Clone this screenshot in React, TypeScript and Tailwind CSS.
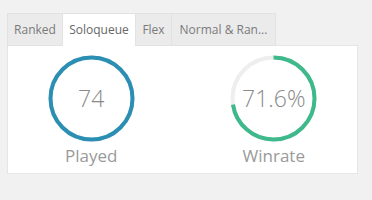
import React from "react";

function Ring({ pct, color, track, label, value }: { pct: number; color: string; track: string; label: string; value: string }) {
  const r = 41.5;
  const c = 2 * Math.PI * r;
  return (
    <div className="flex w-1/2 flex-col items-center">
      <div className="relative h-[87px] w-[87px]">
        <svg width="87" height="87" viewBox="0 0 87 87" className="absolute left-0 top-0 -rotate-90">
          <circle cx="43.5" cy="43.5" r={r - 0.5} fill="none" stroke={track} strokeWidth="4" />
          <circle
            cx="43.5"
            cy="43.5"
            r={r - 0.5}
            fill="none"
            stroke={color}
            strokeWidth="4"
            strokeDasharray={`${c * pct} ${c}`}
          />
        </svg>
        <div className="absolute inset-0 flex items-center justify-center text-[23px] font-light text-[#8a8a8a]">
          {value}
        </div>
      </div>
      <div className="mt-[2px] text-[17px] leading-[24px] text-[#9a9a9a]">{label}</div>
    </div>
  );
}

export default function App() {
  const tabs = [
    { name: "Ranked", w: "w-[55px]" },
    { name: "Soloqueue", w: "w-[73px]", active: true },
    { name: "Flex", w: "w-[36px]" },
    { name: "Normal & Ran...", w: "w-[105px]" },
  ];
  return (
    <div className="h-[200px] w-[372px] bg-[#f1f1f1] pl-[7px] pt-[13px]" style={{ fontFamily: '"Open Sans", sans-serif' }}>
      <div className="flex h-[32px]">
        {tabs.map((t) => (
          <div
            key={t.name}
            className={`${t.w} flex h-[33px] items-center justify-center border border-r-0 border-[#e2e2e2] text-[12px] last:border-r ${
              t.active ? "relative z-10 border-b-0 bg-white text-[#666]" : "bg-[#ebebeb] text-[#7a7a7a]"
            }`}
          >
            {t.name}
          </div>
        ))}
      </div>
      <div className="h-[129px] w-[351px] overflow-hidden border border-[#e6e6e6] bg-white pt-[9px]">
        <div className="-ml-[8px] flex w-[365px]">
          <Ring pct={1} color="#2b8fb3" track="#eeeeee" label="Played" value="74" />
          <Ring pct={0.716} color="#3db98b" track="#eeeeee" label="Winrate" value="71.6%" />
        </div>
      </div>
    </div>
  );
}
